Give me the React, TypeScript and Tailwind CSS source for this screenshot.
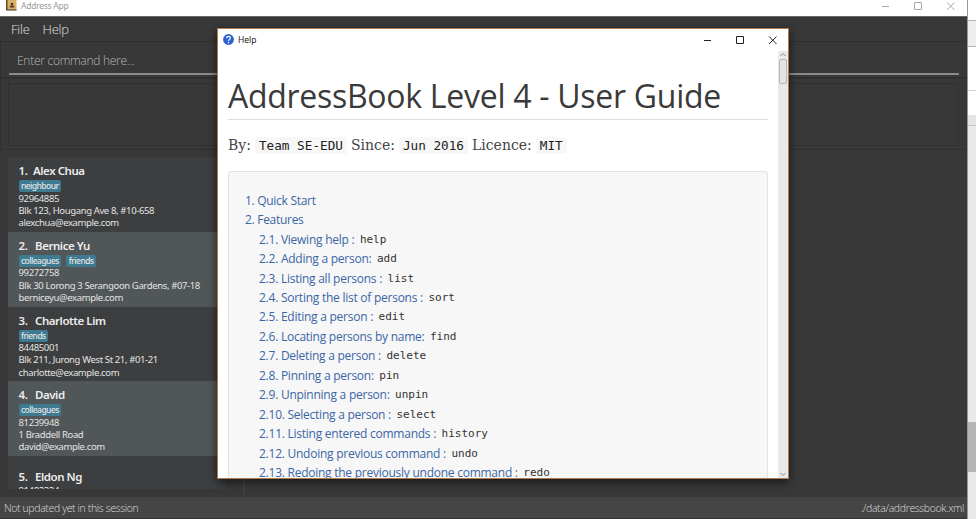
import React from "react";

type Person = { n: number; name: string; tags: string[]; phone: string; address: string; email: string };

const persons: Person[] = [
  { n: 1, name: "Alex Chua", tags: ["neighbour"], phone: "92964885", address: "Blk 123, Hougang Ave 8, #10-658", email: "alexchua@example.com" },
  { n: 2, name: "Bernice Yu", tags: ["colleagues", "friends"], phone: "99272758", address: "Blk 30 Lorong 3 Serangoon Gardens, #07-18", email: "berniceyu@example.com" },
  { n: 3, name: "Charlotte Lim", tags: ["friends"], phone: "84485001", address: "Blk 211, Jurong West St 21, #01-21", email: "charlotte@example.com" },
  { n: 4, name: "David", tags: ["colleagues"], phone: "81239948", address: "1 Braddell Road", email: "david@example.com" },
];

const features: [string, string][] = [
  ["Viewing help :", "help"],
  ["Adding a person:", "add"],
  ["Listing all persons :", "list"],
  ["Sorting the list of persons :", "sort"],
  ["Editing a person :", "edit"],
  ["Locating persons by name:", "find"],
  ["Deleting a person :", "delete"],
  ["Pinning a person:", "pin"],
  ["Unpinning a person:", "unpin"],
  ["Selecting a person :", "select"],
  ["Listing entered commands :", "history"],
  ["Undoing previous command :", "undo"],
  ["Redoing the previously undone command :", "redo"],
];

function WindowButtons({ className }: { className: string }) {
  return (
    <svg width="76" height="12" viewBox="0 0 76 12" fill="none" stroke="currentColor" className={className}>
      <path d="M1 6.5h7" />
      <path d="M33.5 2.5h7v7h-7z" />
      <path d="M66 2.5l7.5 7.5M73.5 2.5l-7.5 7.5" />
    </svg>
  );
}

function BookIcon() {
  return (
    <svg width="11" height="11" viewBox="0 0 11 11" className="mb-[5px] shrink-0">
      <rect x="0" y="0" width="2" height="10" fill="#6b4a2c" />
      <rect x="1.5" y="0" width="9" height="10" fill="#d9b068" />
      <path d="M0 9.5h10.5v1H0z" fill="#3f2c1c" />
      <circle cx="6" cy="4" r="1.3" fill="#5c3820" />
      <path d="M3.6 7.6c0-3 4.8-3 4.8 0z" fill="#5c3820" />
    </svg>
  );
}

function HelpIcon() {
  return (
    <svg width="11" height="11" viewBox="0 0 11 11" className="shrink-0">
      <circle cx="5.5" cy="5.5" r="5.4" fill="#2b62cf" />
      <path d="M3.7 4.2c0-2.7 3.8-2.5 3.6 0C7.2 5.4 5.6 5.4 5.5 7" fill="none" stroke="#fff" strokeWidth="1.2" />
      <circle cx="5.5" cy="8.6" r="0.75" fill="#fff" />
    </svg>
  );
}

function PersonCard({ p }: { p: Person }) {
  return (
    <div className={`h-[74.8px] shrink-0 pl-[10.5px] pt-[6px] text-[#e4e4e4] ${p.n % 2 ? "bg-[#3c3e3f]" : "bg-[#515658]"}`}>
      <div className="flex h-[16px] items-center text-[11.5px] font-semibold leading-4 tracking-[-0.45px] text-[#ececec]">
        <span className={p.n === 1 ? "w-[14.5px]" : "w-[16.5px]"}>{p.n}.</span>
        <span>{p.name}</span>
      </div>
      <div className="mt-px flex h-[12px] gap-[5px]">
        {p.tags.map((t) => (
          <span key={t} className="rounded-[2px] bg-[#3e7b91] px-[2.5px] text-[8.5px] font-medium leading-[12px] tracking-[-0.55px]">{t}</span>
        ))}
      </div>
      <div className="pt-[0.6px] text-[9.5px] leading-[12.2px] tracking-[-0.37px]">
        <div>{p.phone}</div>
        <div>{p.address}</div>
        <div>{p.email}</div>
      </div>
    </div>
  );
}

function Code({ children }: { children: React.ReactNode }) {
  return (
    <span className="mx-[4px] rounded-[3px] bg-[#f7f7f8] px-[4px] font-['DejaVu_Sans_Mono'] text-[12.7px] leading-[17px] text-[#222]">{children}</span>
  );
}

function HelpWindow() {
  return (
    <div className="absolute left-[217px] top-[28px] flex h-[451px] w-[572px] flex-col border border-[#b27a4c] bg-white shadow-[0_3px_9px_rgba(0,0,0,0.6)]">
      <div className="flex h-[22px] shrink-0 items-center pb-px pl-[5px] pr-[9px] text-[#222]">
        <HelpIcon />
        <span className="ml-[4px] flex-1 pt-px text-[8.5px]">Help</span>
        <WindowButtons className="text-[#222]" />
      </div>
      <div className="flex min-h-0 flex-1">
        <div className="min-w-0 flex-1 overflow-hidden px-[10px]">
          <h1 className="mt-[20px] h-[49px] whitespace-nowrap border-b border-[#dddddd] font-['Open_Sans'] text-[32px] leading-[50px] tracking-[-0.28px] text-[#3a3a3a]">
            AddressBook Level 4 - User Guide
          </h1>
          <div className="mt-[16px] flex h-[18px] items-center whitespace-nowrap font-['DejaVu_Serif'] text-[14px] text-[#444]">
            <span>By:</span>
            <Code>Team SE-EDU</Code>
            <span>Since:</span>
            <Code>Jun 2016</Code>
            <span>Licence:</span>
            <Code>MIT</Code>
          </div>
          <div className="mt-[17px] h-[400px] rounded-[3px] border border-[#e2e2e2] bg-[#f7f7f7] pl-[16px] pt-[20px] font-['Open_Sans'] text-[12px] text-[#3a66a5]">
            <div className="h-[18.5px] leading-[18.5px] tracking-[-0.29px]">1. Quick Start</div>
            <div className="h-[19px] leading-[18px] tracking-[-0.29px]">2. Features</div>
            <div className="pl-[14px]">
              {features.map(([label, command], i) => (
                <div key={command} className="flex h-[19.45px] items-center whitespace-pre leading-[19px]">
                  <span className="tracking-[-0.25px]">{`2.${i + 1}. ${label}`}</span>
                  <span className="ml-[5.5px] font-['DejaVu_Sans_Mono'] text-[11px] text-[#333]">{command}</span>
                </div>
              ))}
            </div>
          </div>
        </div>
        <div className="flex w-[10px] shrink-0 flex-col items-center justify-between bg-[#e9e9e9]">
          <div className="flex flex-col items-center">
            <svg width="8" height="8" viewBox="0 0 8 8" fill="none" stroke="#888"><path d="M1.5 5l2.5-2.5L6.5 5" /></svg>
            <div className="h-[25px] w-[8px] rounded-[2px] border border-[#b5b5b5] bg-[#e4e4e4]" />
          </div>
          <svg width="8" height="8" viewBox="0 0 8 8" fill="none" stroke="#888"><path d="M1.5 3l2.5 2.5L6.5 3" /></svg>
        </div>
      </div>
    </div>
  );
}

export default function App() {
  return (
    <div className="relative flex h-[519px] w-[976px] overflow-hidden bg-white font-['Noto_Sans',sans-serif]">
      <div className="flex w-[967px] shrink-0 flex-col bg-[#383838]">
        <header className="flex h-[16px] shrink-0 items-center bg-white pl-[6px] pr-[10px] text-[8.5px] text-[#9a9a9a]">
          <BookIcon />
          <span className="mb-[5px] ml-[4px] flex-1 leading-[11px] tracking-[-0.25px]">Address App</span>
          <WindowButtons className="mb-[5px] text-[#aaa]" />
        </header>
        <nav className="flex h-[25px] shrink-0 items-center gap-[13px] border-t border-[#666] pl-[11px] pt-[2px] font-['Open_Sans'] text-[13px] font-light tracking-[-0.25px] text-[#e0e0e0]">
          <span>File</span>
          <span>Help</span>
        </nav>
        <div className="h-[38px] shrink-0 border border-b-2 border-[#303030] pl-[8px] pr-[7px]">
          <div className="h-[33px] border-b-2 border-[#8b8b8b] pl-[8px] font-['Open_Sans'] text-[12px] font-light leading-[37px] tracking-[-0.27px] text-[#b8b8b8]">Enter command here...</div>
        </div>
        <div className="h-[71px] shrink-0 border border-t-0 border-[#303030] px-[7px] py-[4px]">
          <div className="h-[63px] border border-[#303030]" />
        </div>
        <div className="flex min-h-0 flex-1 pb-[8px] pl-[8px] pt-[7px]">
          <div className="flex w-[217px] flex-col overflow-hidden bg-[#3c3e3f]">
            {persons.map((p) => <PersonCard key={p.n} p={p} />)}
            <div className="h-[33px] overflow-hidden pl-[10.5px] pt-[12px] text-[#ececec]">
              <div className="flex h-[16px] items-center text-[11.5px] font-semibold tracking-[-0.45px]"><span className="w-[16.5px]">5.</span><span>Eldon Ng</span></div>
              <div className="text-[9.5px] leading-[13px] tracking-[-0.38px]">81482224</div>
            </div>
          </div>
          <div className="-mb-[6px] ml-[18px] w-[2px] bg-[#414141]" />
        </div>
        <footer className="flex h-[22px] shrink-0 items-center justify-between border-b border-[#333] bg-[#454545] pl-[4px] pr-[3px] pt-[2px] font-['Open_Sans'] text-[10.5px] font-light tracking-[-0.36px] text-[#dddddd]">
          <span>Not updated yet in this session</span>
          <span>./data/addressbook.xml</span>
        </footer>
      </div>
      <aside className="flex flex-1 flex-col border-l border-[#999] bg-[#e9e9e9]">
        <div className="h-[21px] border-b border-[#b5b5b5] bg-white" />
        <div className="h-[26px] border-b border-[#b5b5b5] bg-[#eeeeee]" />
        <div className="h-[44px] border-b border-[#d0d0d0] bg-white" />
        <div className="h-[24px] bg-white" />
        <div className="h-[11px] border-b border-[#c8c8c8] bg-[#e4e4e4]" />
        <div className="mt-[296px] h-[50px] bg-[#b5b5b5]" />
      </aside>
      <HelpWindow />
    </div>
  );
}
